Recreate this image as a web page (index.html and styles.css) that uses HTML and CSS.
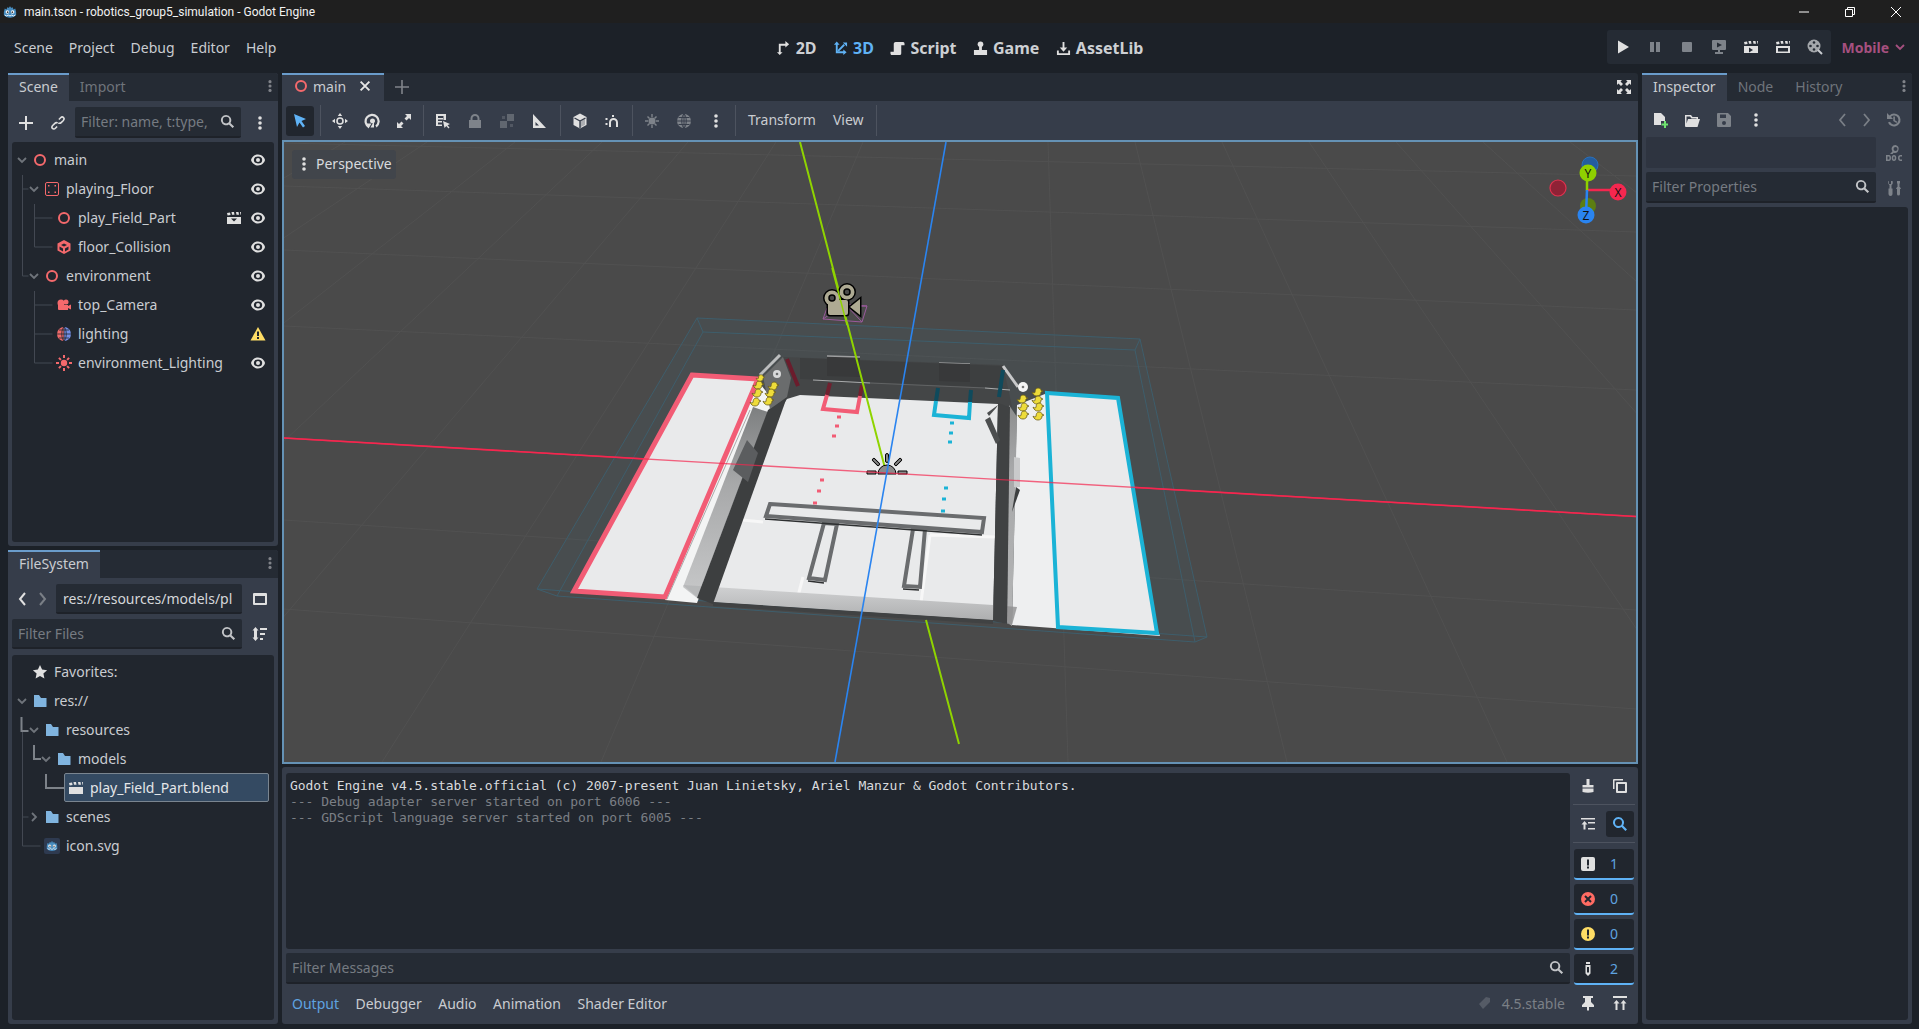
FILE: index.html
```html
<!DOCTYPE html>
<html lang="en">
<head>
  <meta charset="UTF-8" />
  <title>main.tscn - robotics_group5_simulation - Godot Engine</title>
  <link rel="stylesheet" href="styles.css">
</head>
<body>

  <!-- shared icons -->
  <svg class="defs">
    <symbol id="i-eye" viewBox="0 0 16 16"><path fill-rule="evenodd" d="M8 2.500C4.200 2.500 1.500 5.500 1 8c.5 2.500 3.200 5.500 7 5.500s6.500-3 7-5.500c-.5-2.500-3.200-5.500-7-5.500zm0 2a4.200 3.500 0 1 1 0 7 4.200 3.500 0 0 1 0-7z"/><circle cx="8" cy="8" r="2"/></symbol>
    <symbol id="i-dots" viewBox="0 0 16 16"><circle cx="8" cy="3" r="1.800"/><circle cx="8" cy="8" r="1.800"/><circle cx="8" cy="13" r="1.800"/></symbol>
    <symbol id="i-search" viewBox="0 0 16 16"><path d="M6.500 1a5.500 5.500 0 1 0 3 10.100l3.900 3.900 1.600-1.600-3.900-3.900A5.500 5.500 0 0 0 6.500 1zm0 2a3.500 3.500 0 1 1 0 7 3.500 3.500 0 0 1 0-7z"/></symbol>
    <symbol id="i-node" viewBox="0 0 16 16"><circle cx="8" cy="8" r="5" fill="none" stroke="currentColor" stroke-width="2"/></symbol>
    <symbol id="i-arrow" viewBox="0 0 12 12"><path d="M2 4l4 4 4-4" fill="none" stroke="currentColor" stroke-width="1.800"/></symbol>
    <symbol id="i-folder" viewBox="0 0 16 16"><path d="M2 2h5l2 3h5.500v8.500a.5.5 0 0 1-.5.500H2.500a.5.5 0 0 1-.5-.5z"/></symbol>
    <symbol id="i-clapper" viewBox="0 0 16 16"><path d="M1 7h14v7H1zM1 3l3-.6.6 2.600-3 .5zM5.500 2h2.500l.5 2.800H6zM10 2h2.500l.5 2.800h-2.500zM14 2h1v2.800h-.5z"/></symbol>
    <symbol id="i-godot" viewBox="0 0 16 16"><path d="M1 8L2 4l2 1 1-2.500 2 1V2h2v1.500l2-1L12 5l2-1 1 4v3.500c-2 2-4 3-7 3s-5-1-7-3z" fill="#478cbf"/><circle cx="5" cy="8" r="2" fill="#fff"/><circle cx="11" cy="8" r="2" fill="#fff"/><circle cx="5.300" cy="8.200" r="1" fill="#414042"/><circle cx="10.700" cy="8.200" r="1" fill="#414042"/><path d="M2 11.500l2 1 2-1 2 1 2-1 2 1 2-1" fill="none" stroke="#fff"/></symbol>
    <symbol id="i-duck" viewBox="0 0 12 10"><path d="M1 5c1 1 2 1 3 .5C4 3 5 1 7 1s3 1 3 2.500L12 4l-2 1c0 3-2 4-4 4S2 8 1 5z" fill="#eedc3a" stroke="#6b5d18" stroke-width=".8"/></symbol>
    <symbol id="i-ray" viewBox="0 0 10 4"><rect x=".5" y=".5" width="9" height="3" rx="1.500" fill="#8a8a8a" stroke="#000"/></symbol>
  </svg>

  <div class="titlebar">
    <svg class="title-logo"><use href="#i-godot"/></svg>
    <span class="title-text">main.tscn - robotics_group5_simulation - Godot Engine</span>
    <div class="win-btns">
      <svg class="win-btn" viewBox="0 0 12 12"><path d="M1 6h10" stroke="#fff"/></svg>
      <svg class="win-btn" viewBox="0 0 12 12"><path d="M1.500 3.500h7v7h-7zM3.500 3.500v-2h7v7h-2" fill="none" stroke="#fff"/></svg>
      <svg class="win-btn" viewBox="0 0 12 12"><path d="M1 1l10 10M11 1L1 11" stroke="#fff"/></svg>
    </div>
  </div>

  <div class="menubar">
    <nav class="menus">
      <span>Scene</span><span>Project</span><span>Debug</span><span>Editor</span><span>Help</span>
    </nav>
    <div class="modes">
      <span class="mode"><svg class="ico" viewBox="0 0 16 16"><path d="M4 15l-3-3h2V3h7V0l4 3.500L10 7V5H5v7h2z"/></svg>2D</span>
      <span class="mode mode-on"><svg class="ico" viewBox="0 0 16 16"><path d="M1 4l3-3.500L7 4H5v7h6V9l3.500 3-3.500 3v-2H3V4z"/><path d="M5.500 10.500L12 4" stroke="currentColor" stroke-width="2"/><path d="M10.500 1.500H15V6z"/></svg>3D</span>
      <span class="mode"><svg class="ico" viewBox="0 0 16 16"><path d="M6 1h8c1 0 1.500 1 1.500 2v1.500H12V13c0 1.500-1 2-2 2H2c-1 0-1.500-1-1.500-2v-1.500H4V3c0-1 1-2 2-2z"/></svg>Script</span>
      <span class="mode"><svg class="ico" viewBox="0 0 16 16"><circle cx="8" cy="3.500" r="3"/><path d="M6.500 6h3v3.500H15V15H1V9.500h5.500z"/></svg>Game</span>
      <span class="mode"><svg class="ico" viewBox="0 0 16 16"><path d="M7 1h2v6h3l-4 4.500L4 7h3zM1 10h2v3h10v-3h2v5H1z"/></svg>AssetLib</span>
    </div>
    <div class="run-area">
      <div class="run-bar">
        <svg class="ico" viewBox="0 0 16 16"><path d="M3 1.500l11 6.500-11 6.500z"/></svg>
        <svg class="ico dim" viewBox="0 0 16 16"><path d="M3 3h4v10H3zM9 3h4v10H9z"/></svg>
        <svg class="ico dim" viewBox="0 0 16 16"><rect x="3" y="3" width="10" height="10" rx="1"/></svg>
        <svg class="ico dim" viewBox="0 0 16 16"><path d="M2 1h12a1 1 0 0 1 1 1v8a1 1 0 0 1-1 1H9v2h3v2H4v-2h3v-2H2a1 1 0 0 1-1-1V2a1 1 0 0 1 1-1z"/><path d="M6 3.500l5 2.500-5 2.500z" fill="#252b34"/></svg>
        <svg class="ico" viewBox="0 0 16 16"><use href="#i-clapper"/><path d="M6 8.500l4 2.500-4 2.500z" fill="#252b34"/></svg>
        <svg class="ico" viewBox="0 0 16 16"><use href="#i-clapper"/><rect x="3" y="9" width="10" height="3.500" fill="#252b34"/></svg>
        <svg class="ico dim2" viewBox="0 0 16 16"><circle cx="7" cy="7" r="6.500"/><circle cx="7" cy="3.500" r="1.300" fill="#252b34"/><circle cx="3.500" cy="7" r="1.300" fill="#252b34"/><circle cx="10.500" cy="7" r="1.300" fill="#252b34"/><circle cx="7" cy="10.500" r="1.300" fill="#252b34"/><path d="M11 11l4 4" stroke="#c9ccd0" stroke-width="2"/></svg>
      </div>
      <span class="render-mode">Mobile <svg class="chev"><use href="#i-arrow"/></svg></span>
    </div>
  </div>

  <div class="main">

    <div class="col-side">
      <section class="dock dock-scene">
        <div class="tabs">
          <span class="tab on">Scene</span><span class="tab">Import</span>
          <svg class="ico tab-menu"><use href="#i-dots"/></svg>
        </div>
        <div class="tool-row">
          <svg class="ico tool-add" viewBox="0 0 16 16"><path d="M7 1h2v6h6v2H9v6H7V9H1V7h6z"/></svg>
          <svg class="ico tool-link" viewBox="0 0 16 16"><path d="M9 4l2-2c1-1 2.500-1 3.300-.2s.8 2.200-.2 3.300l-2.500 2.500c-1 1-2.300 1-3.100.2M7 12l-2 2c-1 1-2.500 1-3.300.2s-.8-2.200.2-3.300l2.500-2.500c1-1 2.300-1 3.100-.2" fill="none" stroke="currentColor" stroke-width="1.800"/></svg>
          <div class="field field-scene"><span class="ph">Filter: name, t:type,</span><svg class="ico"><use href="#i-search"/></svg></div>
          <svg class="ico tool-more"><use href="#i-dots"/></svg>
        </div>
        <div class="tree">
          <svg class="guides">
            <path d="M10.500 33v101M10.500 47h6M10.500 134h6M22.500 62v43M22.500 76h18M22.500 105h18M22.500 149v72M22.500 163h18M22.500 192h18M22.500 221h18" />
          </svg>
          <div class="row lv0"><svg class="arrow"><use href="#i-arrow"/></svg><svg class="ico red"><use href="#i-node"/></svg><span>main</span><svg class="ico eye"><use href="#i-eye"/></svg></div>
          <div class="row lv1"><svg class="arrow"><use href="#i-arrow"/></svg><svg class="ico red" viewBox="0 0 16 16"><rect x="1.500" y="1.500" width="13" height="13" rx="1.500" fill="none" stroke="currentColor"/><path d="M4 4h1.500v1.500H4zM10.500 4H12v1.500h-1.500zM4 10.500h1.500V12H4zM10.500 10.500H12V12h-1.500z"/></svg><span>playing_Floor</span><svg class="ico eye"><use href="#i-eye"/></svg></div>
          <div class="row lv2"><span class="arrow"></span><svg class="ico red"><use href="#i-node"/></svg><span>play_Field_Part</span><svg class="ico badge" viewBox="0 0 16 16"><use href="#i-clapper"/><path d="M5 8.500h6l-3 3z" fill="#21262e"/></svg><svg class="ico eye"><use href="#i-eye"/></svg></div>
          <div class="row lv2"><span class="arrow"></span><svg class="ico red" viewBox="0 0 16 16"><path d="M8 1l6.500 3.500v7L8 15l-6.500-3.500v-7z"/><path d="M8 4.500L11 6 8 7.500 5 6zM3.500 7.500l3.500 2v3l-3.500-2zM12.500 7.500v3l-3.500 2v-3z" fill="#21262e"/></svg><span>floor_Collision</span><svg class="ico eye"><use href="#i-eye"/></svg></div>
          <div class="row lv1"><svg class="arrow"><use href="#i-arrow"/></svg><svg class="ico red"><use href="#i-node"/></svg><span>environment</span><svg class="ico eye"><use href="#i-eye"/></svg></div>
          <div class="row lv2"><span class="arrow"></span><svg class="ico red" viewBox="0 0 16 16"><circle cx="5" cy="6" r="3.500"/><circle cx="10" cy="5" r="2.500"/><path d="M2 8h10v5H3a1 1 0 0 1-1-1zM12 9l3-1.500v5L12 11z"/></svg><span>top_Camera</span><svg class="ico eye"><use href="#i-eye"/></svg></div>
          <div class="row lv2"><span class="arrow"></span><svg class="ico" viewBox="0 0 16 16"><path d="M8 1a7 7 0 0 0 0 14z" fill="#f06a6a"/><path d="M8 1a7 7 0 0 1 0 14z" fill="#7590e8"/><path d="M1 8h14M8 1v14M3 4h10M3 12h10M8 1C5 3 5 13 8 15M8 1c3 2 3 12 0 14" fill="none" stroke="#21262e" stroke-width=".8"/></svg><span>lighting</span><svg class="ico warn" viewBox="0 0 16 16"><path d="M8 1l7.500 13.500H.5z" fill="#ffdd65"/><path d="M7 5.500h2V10H7zM7 11h2v2H7z" fill="#21262e"/></svg></div>
          <div class="row lv2"><span class="arrow"></span><svg class="ico red" viewBox="0 0 16 16"><circle cx="8" cy="8" r="3.200"/><path d="M7 0h2v3H7zM7 13h2v3H7zM0 7h3v2H0zM13 7h3v2h-3zM2.200 3.600l1.400-1.400 2 2-1.400 1.400zM10.400 11.800l1.400-1.400 2 2-1.400 1.400zM2.200 12.400l2-2 1.400 1.400-2 2zM10.400 4.200l2-2 1.400 1.400-2 2z"/></svg><span>environment_Lighting</span><svg class="ico eye"><use href="#i-eye"/></svg></div>
        </div>
      </section>

      <section class="dock dock-files">
        <div class="tabs">
          <span class="tab on">FileSystem</span>
          <svg class="ico tab-menu"><use href="#i-dots"/></svg>
        </div>
        <div class="nav-row">
          <svg class="arr-btn" viewBox="0 0 12 16"><path d="M8 2L3 8l5 6" fill="none" stroke="#e0e0e0" stroke-width="2"/></svg>
          <svg class="arr-btn" viewBox="0 0 12 16"><path d="M4 2l5 6-5 6" fill="none" stroke="#7a7f86" stroke-width="2"/></svg>
          <div class="field field-path"><span class="path-text">res://resources/models/pl</span></div>
          <svg class="ico split-btn" viewBox="0 0 16 16"><path fill-rule="evenodd" d="M1 3a1 1 0 0 1 1-1h12a1 1 0 0 1 1 1v10a1 1 0 0 1-1 1H2a1 1 0 0 1-1-1zm2 2v7h10V5z"/></svg>
        </div>
        <div class="nav-row">
          <div class="field field-files"><span class="ph">Filter Files</span><svg class="ico"><use href="#i-search"/></svg></div>
          <svg class="ico split-btn" viewBox="0 0 16 16"><path d="M3.500 1l3 3.500H5v7h1.500l-3 3.500-3-3.500H2v-7H.5zM8 2h7v2H8zM8 7h5v2H8zM8 12h3v2H8z"/></svg>
        </div>
        <div class="tree tree-files">
          <svg class="guides">
            <path d="M10.500 75v116M10.500 162h6M10.500 191h18" />
            <path class="strong" d="M9.500 62v14h7M22 90v14h7M34 119v14h18" />
          </svg>
          <div class="row lv0"><span class="arrow"></span><svg class="ico star" viewBox="0 0 16 16"><path d="M8 1l2.100 4.600 5 .6-3.700 3.400 1 4.900L8 12.100l-4.400 2.400 1-4.900L.9 6.200l5-.6z"/></svg><span>Favorites:</span></div>
          <div class="row lv0"><svg class="arrow"><use href="#i-arrow"/></svg><svg class="ico folder"><use href="#i-folder"/></svg><span>res://</span></div>
          <div class="row lv1"><svg class="arrow"><use href="#i-arrow"/></svg><svg class="ico folder"><use href="#i-folder"/></svg><span>resources</span></div>
          <div class="row lv2"><svg class="arrow"><use href="#i-arrow"/></svg><svg class="ico folder"><use href="#i-folder"/></svg><span>models</span></div>
          <div class="row lv3 selected"><svg class="ico clap"><use href="#i-clapper"/></svg><span>play_Field_Part.blend</span></div>
          <div class="row lv1"><svg class="arrow arrow-closed"><use href="#i-arrow"/></svg><svg class="ico folder"><use href="#i-folder"/></svg><span>scenes</span></div>
          <div class="row lv1"><span class="arrow"></span><span class="svg-chip"><svg class="ico chip-ico"><use href="#i-godot"/></svg></span><span>icon.svg</span></div>
        </div>
      </section>
    </div>

    <div class="col-center">
      <section class="editor">
        <div class="tabs tabs-scene">
          <span class="tab on tab-main"><svg class="ico red"><use href="#i-node"/></svg>main<svg class="ico tab-close" viewBox="0 0 16 16"><path d="M3 3l10 10M13 3L3 13" stroke="currentColor" stroke-width="2.200"/></svg></span>
          <svg class="ico tab-plus" viewBox="0 0 16 16"><path d="M7.200 1h1.600v6.200H15v1.600H8.800V15H7.200V8.800H1V7.200h6.200z"/></svg>
          <svg class="ico tab-full" viewBox="0 0 16 16"><path d="M1 1h5L4.500 2.500 7 5 5 7 2.500 4.500 1 6zM15 1v5l-1.500-1.500L11 7 9 5l2.500-2.500L10 1zM1 15v-5l1.500 1.500L5 9l2 2-2.500 2.500L6 15zM15 15h-5l1.500-1.500L9 11l2-2 2.500 2.500L15 10z"/></svg>
        </div>
        <div class="toolbar">
          <span class="tb tb-on"><svg class="ico" viewBox="0 0 16 16"><path d="M2 1l12 5-4.500 2 3.500 5-2 1.500L7.500 9.500 5 14z"/></svg></span>
          <i class="sep"></i>
          <span class="tb"><svg class="ico" viewBox="0 0 16 16"><circle cx="8" cy="8" r="3" fill="none" stroke="currentColor" stroke-width="1.600"/><path d="M8 0l2.200 3H5.800zM8 16l-2.200-3h4.400zM0 8l3-2.200v4.400zM16 8l-3 2.200V5.800z"/></svg></span>
          <span class="tb"><svg class="ico" viewBox="0 0 16 16"><path d="M5 14A6.500 6.500 0 1 1 12 13.500" fill="none" stroke="currentColor" stroke-width="2.200"/><path d="M6 8a2.500 2.500 0 0 1 5 0c0 1-.5 1.500-1 2v4.500H6.500L9 10c-1 .5-3 0-3-2zM1.500 10.500h6l-3 5z"/></svg></span>
          <span class="tb"><svg class="ico" viewBox="0 0 16 16"><path d="M9 1h6v6l-2-2-2.500 2.500L8.500 5.500 11 3zM7 15H1V9l2 2 2.500-2.500 2 2L5 13z"/></svg></span>
          <i class="sep"></i>
          <span class="tb"><svg class="ico" viewBox="0 0 16 16"><path fill-rule="evenodd" d="M1 1h10v6H8.500V3H3v2h5v1.500H3V8h4v1.500H3v2h4V13H1z"/><path d="M8 8l7 3-2.500 1.200 2 2.300-1 1-2.200-2.500L9.500 15z"/></svg></span>
          <span class="tb dim"><svg class="ico" viewBox="0 0 16 16"><path fill-rule="evenodd" d="M8 1a4.500 4.500 0 0 0-4.500 4.500V7H2v8h12V7h-1.500V5.500A4.500 4.500 0 0 0 8 1zm0 2a2.500 2.500 0 0 1 2.500 2.500V7h-5V5.500A2.500 2.500 0 0 1 8 3z"/></svg></span>
          <span class="tb dim"><svg class="ico" viewBox="0 0 16 16"><path d="M8 1h7v7H8zM1 8h7v7H1z" opacity=".6"/><path d="M3 3h3v3H3zM11 11h3v3h-3z" opacity=".4"/></svg></span>
          <span class="tb"><svg class="ico" viewBox="0 0 16 16"><path fill-rule="evenodd" d="M2 1l13 14H2zm2.500 8v3.500H8z"/></svg></span>
          <i class="sep sep-a"></i>
          <span class="tb"><svg class="ico" viewBox="0 0 16 16"><path d="M8 .5l6.500 3.500v8L8 15.500 1.500 12V4z"/><path d="M8 8L2.500 5M8 8l5.500-3M8 8v7" stroke="#363d4a" stroke-width="1.400"/><path d="M8 8l5-2.800v6.600L8 14.500z" fill="#363d4a" opacity=".3"/></svg></span>
          <span class="tb"><svg class="ico" viewBox="0 0 16 16"><path d="M6 14V9.500a3.500 3.500 0 0 1 7 0V14" fill="none" stroke="currentColor" stroke-width="2"/><path d="M1.500 5h2v2h-2zM1.500 10h2v2h-2zM8 2h2v2H8z"/></svg></span>
          <i class="sep sep-b"></i>
          <span class="tb dim"><svg class="ico" viewBox="0 0 16 16"><circle cx="8" cy="8" r="3.500"/><path d="M7.300 1h1.400v3H7.300zM7.300 12h1.400v3H7.300zM1 7.300h3v1.400H1zM12 7.300h3v1.400h-3zM3 4l1-1 2 2-1 1zM10 11l1-1 2 2-1 1zM3 12l2-2 1 1-2 2zM10 5l2-2 1 1-2 2z"/></svg></span>
          <span class="tb dim"><svg class="ico" viewBox="0 0 16 16"><circle cx="8" cy="8" r="7"/><path d="M1 8h14M8 1v14M2.500 4.500h11M2.500 11.500h11M8 1C5 3 5 13 8 15M8 1c3 2 3 12 0 14" fill="none" stroke="#363d4a"/></svg></span>
          <span class="tb"><svg class="ico"><use href="#i-dots"/></svg></span>
          <i class="sep"></i>
          <span class="tb-text tb-transform">Transform</span>
          <span class="tb-text">View</span>
          <i class="sep sep-end"></i>
        </div>

        <div class="viewport">
          <svg class="scene" viewBox="284 142 1352 620">
            <defs>
              <linearGradient id="wall-l" x1="0" y1="0" x2="0" y2="1"><stop offset="0" stop-color="#7d7f80"/><stop offset=".4" stop-color="#a7a8a9"/><stop offset="1" stop-color="#c7c8c9"/></linearGradient>
              <linearGradient id="wall-b" x1="0" y1="0" x2="0" y2="1"><stop offset="0" stop-color="#cfd0d1"/><stop offset="1" stop-color="#aeafb0"/></linearGradient>
              <linearGradient id="wall-r" x1="0" y1="0" x2="0" y2="1"><stop offset="0" stop-color="#8c8d8e"/><stop offset=".3" stop-color="#a8a9aa"/><stop offset="1" stop-color="#b4b5b6"/></linearGradient>
            </defs>

            <!-- ground grid -->
            <g class="grid">
              <path d="M345 142L-706 762M427 142L-499 762M515 142L-277 762M602 142L-57 762M688 142L160 762M776 142L382 762M863 142L601 762M1048 142L1068 762M1135 142L1287 762M1222 142L1507 762M1309 142L1726 762M1396 142L1946 762M1483 142L2165 762M1570 142L2385 762"/>
              <path d="M284 143L1636 176M284 186L1636 232M284 326L1636 390M284 609L1636 709M284 250L1636 310M284 520L1636 610"/>
            </g>

            <!-- bounding boxes round the field -->
            <path d="M697 318L1140 339 1207 637 537 589z" fill="#40606c" opacity=".18"/>
            <path class="wire" d="M697 318L1140 339 1207 637 537 589zM703 332L1135 350 1195 642 557 596zM697 318l6 14M1140 339l-5 11M537 589l20 7M1207 637l-12 5"/>

            <!-- red axis, under the floor pieces where it turns faint -->
            <path d="M284 438L1636 516.500" stroke="#f5274f" stroke-width="1.600"/>

            <!-- side strips and fields -->
            <path d="M757 380L773 400 697 603 665 600z" fill="#f3f4f4"/>
            <path d="M1017 405L1050 392 1160 636 1012 625z" fill="#eeeff0"/>
            <path class="field-red" d="M692 375L758 379 665 597 574 591z"/>
            <path class="field-blue" d="M1047 393L1118 398 1157 633 1058 627z"/>
            <path d="M750 410L667 599" stroke="#a9aaab" stroke-width="1"/>

            <!-- back wall -->
            <path d="M783 357L1003 365 1012 407 998 404 800 395 783 400z" fill="#444647"/>
            <path d="M800 358L1003 366 1003 388 800 379z" fill="#3d3f40"/>
            <path d="M827 356L860 357 860 377 827 376z" fill="#38393a"/>
            <path d="M827 356L860 357M939 363L970 364" stroke="#9d9e9f" stroke-width="1.500"/>
            <path d="M939 363L970 364 970 382 939 381z" fill="#38393a"/>
            <path d="M870 383L985 388" stroke="#616364" stroke-width="1"/>
            <path d="M813 380L870 383M985 388L1010 390" stroke="#a9abac" stroke-width="1"/>

            <!-- walls lit side -->
            <path d="M753 407L768 412 697 598 683 587z" fill="url(#wall-l)"/>
            <path d="M1009 405L1017 417 1012 626 1007 622z" fill="url(#wall-r)"/>

            <!-- floor -->
            <path d="M787 399L800 395 998 404 993 620 713 602 783 405z" fill="#e9eaeb"/>
            <path d="M742 520L763 522M930 535L995 537M930 535L920 610M803 577L797 600" stroke="#f7f7f7" stroke-width="3" fill="none"/>
            <path d="M713 587L993 605 993 620 713 602z" fill="url(#wall-b)"/>
            <path d="M683 585L713 587 713 602 697 597z" fill="#b3b4b5" opacity=".8"/>
            <path d="M993 605L1017 607 1012 625 993 620z" fill="#8e8f90" opacity=".8"/>
            <path d="M713 602L993 620 993 624 713 606z" fill="#404243"/>

            <!-- walls dark side, over the band at the front -->
            <path d="M768 410L787 397 713 604 697 598z" fill="#3d3f40"/>
            <path d="M998 403L1010 407 1007 624 993 621z" fill="#404243"/>

            <path d="M985 420L990 417 1000 440 996 444zM987 413L998 405 996 408 989 416z" fill="#4c4e4f"/>
            <path d="M747 440L758 453 748 482 733 470z" fill="#5b5d5f"/>
            <path d="M1014 457L1020 458 1020 487 1014 487z" fill="#c9cacb"/>
            <path d="M1016 487L1020 490 1012 512z" fill="#3d3f40"/>

            <!-- corner posts -->
            <path d="M763 377L783 357 791 378 787 397 770 409z" fill="#6a6c6d"/>
            <path d="M760 375L780 355" stroke="#bcbebf" stroke-width="3"/>
            <circle cx="777" cy="374" r="4" fill="#d8d9da"/>
            <circle cx="777" cy="374" r="1.300" fill="#6a6c6d"/>
            <path d="M787 359L798 386" stroke="#6b1c2c" stroke-width="4"/>
            <path d="M1003 366L1018 387" stroke="#c8c9ca" stroke-width="3"/>
            <circle cx="1023" cy="387" r="5" fill="#f4f4f4"/>
            <circle cx="1023" cy="387" r="1.300" fill="#777"/>
            <path d="M1003 370L999 397" stroke="#0f4a5c" stroke-width="4"/>

            <!-- goals and dots -->
            <path d="M830 383L827 395M862 385L860 396" stroke="#70202f" stroke-width="4"/>
            <path class="goal-red" d="M827 395L823 409 857 412 860 396"/>
            <path d="M938 388L936 401M971 390L970 402" stroke="#0f4a5c" stroke-width="4"/>
            <path class="goal-blue" d="M936 401L934 415 969 418 970 402"/>
            <path class="dots-red" d="M837 417h4M835 426h4M832 436h4M820 480h4M817 491h4M813 503h4"/>
            <path class="dots-blue" d="M950 423h4M949 433h4M948 442h4M944 488h4M942 499h4M941 511h4"/>

            <!-- T shaped line -->
            <path class="t-bar" d="M770 504L984 518 982 532 766 516z"/>
            <path class="t-bar" d="M824 523L809 578 825 580 837 524z"/>
            <path class="t-bar" d="M913 529L904 586 920 587 925 529z"/>
            <path d="M765 519L982 535M808 581L824 583M903 589L919 590" stroke="#2e3031" stroke-width="1.500"/>

            <!-- ducks -->
            <use href="#i-duck" x="752" y="380" width="12" height="10"/><use href="#i-duck" x="751" y="388" width="12" height="10"/><use href="#i-duck" x="749" y="397" width="12" height="10"/><use href="#i-duck" x="755" y="374" width="10" height="8"/>
            <use href="#i-duck" x="767" y="381" width="12" height="10"/><use href="#i-duck" x="764" y="388" width="12" height="10"/><use href="#i-duck" x="762" y="396" width="12" height="10"/>
            <use href="#i-duck" x="1016" y="394" width="12" height="10"/><use href="#i-duck" x="1017" y="402" width="12" height="10"/><use href="#i-duck" x="1017" y="410" width="12" height="10"/>
            <use href="#i-duck" x="1031" y="387" width="12" height="10"/><use href="#i-duck" x="1031" y="395" width="12" height="10"/><use href="#i-duck" x="1032" y="402" width="12" height="10"/><use href="#i-duck" x="1032" y="411" width="12" height="10"/>

            <!-- axes above the floor -->
            <path d="M800 142L886 472M926 620L959 744" stroke="#8fd400" stroke-width="2"/>

            <!-- camera gizmo -->
            <path class="frustum" d="M827 308L867 306 862 322 823 319zM827 308L845 304M867 306L845 304M862 322L845 304M823 319L845 304"/>
            <g class="cam-outline">
              <circle cx="832" cy="298" r="7.500"/><circle cx="847" cy="292" r="7.500"/><rect x="828" y="300" width="20" height="15" rx="2"/><path d="M850 307l10-8v16z"/>
            </g>
            <g class="cam-icon">
              <circle cx="832" cy="298" r="7.500"/><circle cx="847" cy="292" r="7.500"/><rect x="828" y="300" width="20" height="15" rx="2"/><path d="M850 307l10-8v16z"/>
            </g>
            <g class="cam-hole"><circle cx="832" cy="298" r="3"/><circle cx="847" cy="292" r="3"/></g>
            <path d="M832 268L847 325" stroke="#8fd400" stroke-width="1.500"/>

            <!-- light gizmo -->
            <path d="M878 474a9 9 0 0 1 18 0z" fill="#8a8a8a" stroke="#000"/>
            <use href="#i-ray" x="882" y="456" width="10" height="4" transform="rotate(90 887 458)"/>
            <use href="#i-ray" x="871" y="460" width="10" height="4" transform="rotate(45 876 462)"/>
            <use href="#i-ray" x="893" y="460" width="10" height="4" transform="rotate(-45 898 462)"/>
            <path d="M867 474v-3h9v3zM898 474v-3h9v3z" fill="#8a8a8a" stroke="#000"/>

            <path d="M284 438L1636 516.500" stroke="#f5274f" stroke-width="1.400" opacity=".7"/>
            <path d="M946 142L835 762" stroke="#2a84f0" stroke-width="1.600"/>

            <!-- orientation gizmo -->
            <circle cx="1590" cy="165" r="8" fill="#235d9f" stroke="#2a6fb8"/>
            <circle cx="1558" cy="188" r="8" fill="#8f2236" stroke="#e0324f" stroke-width="1.200"/>
            <circle cx="1588" cy="206" r="8" fill="#5c7e12"/>
            <path d="M1587 190H1618" stroke="#f5274f" stroke-width="2.500"/>
            <path d="M1587 191V173" stroke="#8fd000" stroke-width="2.500"/>
            <path d="M1587 190L1586 215" stroke="#2a84f0" stroke-width="2.500"/>
            <circle cx="1618" cy="192" r="8.500" fill="#f5274f"/>
            <circle cx="1588" cy="173" r="8.500" fill="#8fd000"/>
            <circle cx="1586" cy="215" r="8.500" fill="#2a84f0"/>
            <text class="giz-text" x="1618" y="196.500">X</text>
            <text class="giz-text" x="1588" y="177.500">Y</text>
            <text class="giz-text" x="1586" y="219.500">Z</text>
          </svg>
          <div class="persp"><svg class="ico"><use href="#i-dots"/></svg>Perspective</div>
        </div>
      </section>

      <section class="bottom">
        <div class="bottom-body">
          <div class="log-col">
            <pre class="log"><span class="log-head">Godot Engine v4.5.stable.official (c) 2007-present Juan Linietsky, Ariel Manzur &amp; Godot Contributors.</span>
--- Debug adapter server started on port 6006 ---
--- GDScript language server started on port 6005 ---</pre>
            <div class="field field-log"><span class="ph">Filter Messages</span><svg class="ico"><use href="#i-search"/></svg></div>
          </div>
          <div class="log-side">
            <div class="side-row">
              <svg class="ico" viewBox="0 0 16 16"><path d="M6.500 1h3v6h4v2.500h-11V7h4zM2.500 10.500h11V14c-3.500 1-7.500 1-11 0z"/></svg>
              <svg class="ico" viewBox="0 0 16 16"><path d="M2 1h9v1.500H2.500V11H1V2a1 1 0 0 1 1-1z"/><path fill-rule="evenodd" d="M5 4h9a1 1 0 0 1 1 1v9a1 1 0 0 1-1 1H5a1 1 0 0 1-1-1V5a1 1 0 0 1 1-1zm1 2v7h7V6z"/></svg>
            </div>
            <i class="side-sep"></i>
            <div class="side-row">
              <svg class="ico" viewBox="0 0 16 16"><path d="M1 2h14v1.500H1zM8 6h7v1.500H8zM8 12h7v1.500H8zM4.500 5l3 3.500H5.500V13.500h-2V8.500h-2z"/></svg>
              <span class="side-on"><svg class="ico"><use href="#i-search"/></svg></span>
            </div>
            <i class="side-sep"></i>
            <div class="count"><svg class="ico" viewBox="0 0 16 16"><path fill-rule="evenodd" d="M3 1h10a2 2 0 0 1 2 2v10a2 2 0 0 1-2 2H3a2 2 0 0 1-2-2V3a2 2 0 0 1 2-2zm4 2.500v6h2v-6zm0 7V12.500h2v-2z"/></svg><span>1</span></div>
            <div class="count"><svg class="ico" viewBox="0 0 16 16"><circle cx="8" cy="8" r="7" fill="#ff6b63"/><path d="M5 5l6 6M11 5l-6 6" stroke="#21262e" stroke-width="2"/></svg><span>0</span></div>
            <div class="count"><svg class="ico" viewBox="0 0 16 16"><circle cx="8" cy="8" r="7" fill="#ffdd65"/><path d="M7 3.500h2v6H7zM7 10.500h2v2H7z" fill="#21262e"/></svg><span>0</span></div>
            <div class="count"><svg class="ico" viewBox="0 0 16 16"><path fill-rule="evenodd" d="M6 1h4v2H6zM5.500 4h5v8.500L8 15l-2.500-2.500zM7 6v5.500h2V6z"/></svg><span>2</span></div>
          </div>
        </div>
        <div class="bottom-tabs">
          <span class="btab btab-on">Output</span><span class="btab">Debugger</span><span class="btab">Audio</span><span class="btab">Animation</span><span class="btab">Shader Editor</span>
          <div class="bottom-right">
            <svg class="ico ver-ico" viewBox="0 0 16 16"><path d="M3 9l7-7 4 1 0 4-7 7z"/></svg>
            <span class="version">4.5.stable</span>
            <svg class="ico pin" viewBox="0 0 16 16"><path d="M3 1h10v2h-2v4l3 3v2H9v3.500H7V12H2v-2l3-3V3H3z"/></svg>
            <svg class="ico pin2" viewBox="0 0 16 16"><path d="M1 1h14v2H1zM4.500 5l3 3.500H5.500V15h-2V8.500h-2zM11.500 5l3 3.500h-2V15h-2V8.500h-2z"/></svg>
          </div>
        </div>
      </section>
    </div>

    <div class="col-side col-right">
      <section class="dock dock-inspector">
        <div class="tabs">
          <span class="tab on">Inspector</span><span class="tab">Node</span><span class="tab">History</span>
          <svg class="ico tab-menu"><use href="#i-dots"/></svg>
        </div>
        <div class="insp-tools">
          <svg class="ico" viewBox="0 0 16 16"><path d="M2 1h7l4 4v4H9v4H2z"/><path d="M12 9h2v2.500h2v2h-2V16h-2v-2.500H9.500v-2H12z" fill="#6fe36f"/></svg>
          <svg class="ico" viewBox="0 0 16 16"><path fill-rule="evenodd" d="M1 3h6l1.500 2H14v2h2l-2.500 8H2a1 1 0 0 1-1-1zm1.500 1.500v7L4 7h8.500V6.500H7.500L6 4.500z"/></svg>
          <svg class="ico dim" viewBox="0 0 16 16"><path fill-rule="evenodd" d="M2 1h10l3 3v10a1 1 0 0 1-1 1H2a1 1 0 0 1-1-1V2a1 1 0 0 1 1-1zm2 1.500V6h6V2.500zM8 9a2 2 0 1 0 0 4 2 2 0 0 0 0-4z"/></svg>
          <svg class="ico"><use href="#i-dots"/></svg>
          <span class="insp-spacer"></span>
          <svg class="arr-btn" viewBox="0 0 12 16"><path d="M8 2L3 8l5 6" fill="none" stroke="#7a7f86" stroke-width="1.800"/></svg>
          <svg class="arr-btn" viewBox="0 0 12 16"><path d="M4 2l5 6-5 6" fill="none" stroke="#7a7f86" stroke-width="1.800"/></svg>
          <svg class="ico dim hist" viewBox="0 0 16 16"><path d="M8 1.500a6.500 6.500 0 1 1-6 9l2-.8A4.400 4.400 0 1 0 5 4.800L7 7H1V1l2.500 2.500A6.500 6.500 0 0 1 8 1.500zM7.300 4.500h1.600v3.700l2.400 1.500-.8 1.300-3.200-2z"/></svg>
        </div>
        <div class="insp-row">
          <div class="field field-blank"></div>
          <svg class="ico dim side-ico" viewBox="0 0 16 16"><path d="M9.500 0a4 4 0 0 0-3.100 6.500L4 9h2.500l1.200-1.200A4 4 0 1 0 9.500 0zm0 2a2 2 0 1 1 0 4 2 2 0 0 1 0-4z"/><path fill-rule="evenodd" d="M0 10h3c1.300 0 2 1 2 3s-.7 3-2 3H0zm1.500 1.500v3H3c.4 0 .5-.7.5-1.500S3.400 11.500 3 11.500zM8 10c1.500 0 2.300 1.200 2.300 3S9.500 16 8 16s-2.300-1.200-2.300-3 .8-3 2.300-3zm0 1.500c-.5 0-.8.600-.8 1.500s.3 1.500.8 1.500.8-.6.800-1.500-.3-1.500-.8-1.500zM16 10v1.500h-1.500c-.6 0-1 .6-1 1.500s.4 1.500 1 1.500H16V16h-1.500c-1.500 0-2.500-1.200-2.500-3s1-3 2.500-3z"/></svg>
        </div>
        <div class="insp-row">
          <div class="field field-props"><span class="ph">Filter Properties</span><svg class="ico"><use href="#i-search"/></svg></div>
          <svg class="ico dim side-ico" viewBox="0 0 16 16"><path d="M3 1v3h2V1h1.500c.5 1.500.5 3-1 4v3.500h1V14a2 2 0 0 1-2 2 2 2 0 0 1-2-2V8.500h1V5c-1.500-1-1.500-2.500-1-4zM11 1h3v2.500h-.5V7H14l1 2h-1v5a1.500 1.500 0 0 1-3 0V9h-1l1-2h.5V3.500H11z"/></svg>
        </div>
        <div class="tree insp-tree"></div>
      </section>
    </div>

  </div>

</body>
</html>
```

FILE: styles.css
```css
* {
  box-sizing: border-box;
}

html, body {
  margin: 0;
  width: 1919px;
  height: 1029px;
  overflow: hidden;
}

body {
  display: flex;
  flex-direction: column;
  background-color: #1c2128;
  color: #c9ccd1;
  font-family: "Noto Sans", sans-serif;
  font-size: 14px;
}

.defs {
  display: none;
}

.ico {
  width: 16px;
  height: 16px;
  flex: none;
  fill: currentColor;
  color: #e0e0e0;
}

.dim { color: #7e838a; }
.dim2 { color: #a4a7ab; }
.red { color: #f4696c; }

/* title bar */
.titlebar {
  display: flex;
  align-items: center;
  height: 23px;
  background-color: #1f1f1f;
  color: #f2f2f2;
  font-family: Roboto, sans-serif;
  font-size: 12px;
  padding-left: 3px;
}

.title-logo {
  width: 14px;
  height: 14px;
  margin-right: 7px;
}

.win-btns {
  display: flex;
  margin-left: auto;
  margin-right: 17px;
  gap: 34px;
}

.win-btn {
  width: 12px;
  height: 12px;
}

/* top menu */
.menubar {
  display: grid;
  grid-template-columns: 1fr auto 1fr;
  align-items: center;
  height: 50px;
  padding-bottom: 2px;
}

.menus {
  display: flex;
  gap: 16px;
  padding-left: 14px;
}

.modes {
  display: flex;
  gap: 16.5px;
  padding-top: 2px;
  font-size: 16px;
  font-weight: 700;
}

.mode {
  display: flex;
  align-items: center;
  gap: 5px;
  color: #cdd0d4;
}

.mode .ico {
  width: 15px;
  height: 15px;
}

.mode-on, .mode-on .ico {
  color: #5fb2f5;
}

.run-area {
  display: flex;
  align-items: center;
  justify-content: flex-end;
  padding-right: 13px;
}

.run-bar {
  display: flex;
  align-items: center;
  gap: 16px;
  height: 34px;
  padding: 0 8px;
  background-color: #252b34;
  border-radius: 3px;
}

.run-bar .ico {
  width: 16px;
}

.render-mode {
  display: flex;
  align-items: center;
  gap: 5px;
  margin-left: 10px;
  color: #a5507f;
  font-weight: 700;
}

.chev {
  width: 12px;
  height: 12px;
  color: #a5507f;
}

/* main columns */
.main {
  display: flex;
  gap: 4px;
  height: 951px;
  padding: 0 7px 0 8px;
}

.col-side {
  display: flex;
  flex-direction: column;
  gap: 4px;
  width: 270px;
  flex: none;
}

.col-center {
  display: flex;
  flex-direction: column;
  gap: 3px;
  width: 1356px;
  flex: none;
}

.dock {
  display: flex;
  flex-direction: column;
  background-color: #363d4a;
  border-radius: 3px;
  padding-bottom: 4px;
}

.dock-scene {
  height: 473px;
}

.dock-files {
  flex: 1;
}

.dock-inspector {
  flex: 1;
}

.tabs {
  display: flex;
  align-items: stretch;
  flex: none;
  height: 28px;
  background-color: #252b34;
  border-radius: 3px 3px 0 0;
  color: #6f747b;
}

.tab {
  display: flex;
  align-items: center;
  padding: 0 11px 2px;
}

.tab.on {
  background-color: #363d4a;
  border-top: 2px solid #6a9ccb;
  color: #c9ccd1;
  padding-bottom: 4px;
}

.tab-menu {
  margin: 6px 1px 0 auto;
  color: #808389;
  width: 14px;
  height: 14px;
}

/* input boxes */
.field {
  display: flex;
  align-items: center;
  justify-content: space-between;
  height: 31px;
  padding: 0 6px;
  background-color: #252b34;
  border-bottom: 2px solid #1e2229;
  border-radius: 2px;
}

.ph {
  color: #767b82;
}

.field .ico {
  color: #c2c4c7;
  width: 15px;
  height: 15px;
}

.tool-row {
  display: flex;
  align-items: center;
  height: 41px;
  padding: 4px 0 2px 10px;
}

.tool-link {
  margin-left: 17px;
  width: 14px;
}

.field-scene {
  width: 166px;
  margin-left: 10px;
  white-space: nowrap;
}

.tool-more {
  margin-left: 11px;
}

.nav-row {
  display: flex;
  align-items: center;
  flex: none;
  margin-top: 5px;
  padding-left: 4px;
  height: 30px;
}

.tabs + .nav-row {
  margin-top: 6px;
}

.nav-row .field {
  height: 30px;
}

.arr-btn {
  width: 12px;
  height: 16px;
  flex: none;
}

.nav-row .arr-btn:first-child {
  margin-left: 5px;
}

.nav-row .arr-btn + .arr-btn {
  margin-left: 7px;
}

.field-path {
  width: 186px;
  margin-left: 8px;
  padding-left: 7px;
}

.path-text {
  color: #d5d7da;
  white-space: nowrap;
}

.field-files {
  width: 230px;
}

.split-btn {
  margin-left: 10px;
}

/* trees */
.tree {
  position: relative;
  flex: 1;
  margin: 0 4px;
  padding-top: 3px;
  background-color: #21262e;
  border-radius: 3px;
}

.tree-files {
  margin-top: 6px;
  padding-top: 2px;
}

.guides {
  position: absolute;
  left: 0;
  top: 0;
  width: 100%;
  height: 100%;
  fill: none;
  stroke: #434852;
  stroke-width: 1;
}

.guides .strong {
  stroke: #7d8289;
  stroke-width: 2;
}

.row {
  position: relative;
  display: flex;
  align-items: center;
  height: 29px;
  padding-right: 8px;
  color: #c9ccd1;
}

.lv0 { padding-left: 4px; }
.lv1 { padding-left: 16px; }
.lv2 { padding-left: 28px; }
.lv3 { padding-left: 52px; }

.arrow {
  display: block;
  width: 12px;
  height: 12px;
  margin-right: 4px;
  flex: none;
  color: #6f747b;
}

.arrow-closed {
  transform: rotate(-90deg);
}

.row > .ico:not(.eye):not(.badge):not(.warn) {
  margin-right: 6px;
}

.eye {
  margin-left: auto;
  color: #e0e0e0;
}

.warn {
  margin-left: auto;
}

.badge {
  margin-left: auto;
}

.badge + .eye {
  margin-left: 8px;
}

.folder {
  color: #80b4df;
}

.star {
  color: #e0e0e0;
}

.selected {
  width: 205px;
  margin-left: 52px;
  padding-left: 3px;
  background-color: #344a62;
  border: 1px solid #7a8590;
  border-radius: 2px;
  color: #e4e6e8;
}

.svg-chip {
  display: flex;
  align-items: center;
  justify-content: center;
  width: 16px;
  height: 16px;
  margin-right: 6px;
  background-color: #2e3a50;
  border-radius: 2px;
}

.chip-ico {
  width: 12px;
  height: 12px;
}

/* scene tabs and toolbar */
.editor {
  display: flex;
  flex-direction: column;
  height: 691px;
}

.tabs-scene {
  align-items: center;
}

.tab.tab-main {
  height: 28px;
  width: 102px;
  padding: 0 0 4px 11px;
  color: #c9ccd1;
}

.tab-main .ico.red {
  margin-right: 4px;
}

.tab-close {
  margin-left: 12px;
  width: 14px;
  height: 14px;
  color: #e6e6e6;
}

.tab-plus {
  margin-left: 10px;
  color: #80848a;
}

.tab-full {
  margin-left: auto;
  margin-right: 6px;
}

.toolbar {
  display: flex;
  align-items: center;
  flex: none;
  height: 39px;
  padding-left: 4px;
  background-color: #363d4a;
}

.tb {
  display: flex;
  align-items: center;
  justify-content: center;
  width: 32px;
  height: 30px;
  flex: none;
  color: #e0e0e0;
}

.tb .ico {
  color: inherit;
}

.tb.dim {
  color: #7e838a;
}

.tb-on {
  width: 28px;
  margin-right: 3px;
  background-color: #21262e;
  border-radius: 3px;
  color: #5fb2f5;
}

.sep {
  width: 1px;
  height: 31px;
  margin: 0 3px;
  background-color: #4d535f;
  flex: none;
}

.sep-a {
  margin-left: 5px;
}

.sep-b {
  margin-left: 4px;
}

.tb-text {
  margin-left: 17px;
  padding-bottom: 2px;
  color: #c9ccd1;
}

.tb-transform {
  margin-left: 9px;
}

.sep-end {
  margin-left: 12px;
}

/* 3D view */
.viewport {
  position: relative;
  flex: 1;
  background-color: #4a4a4a;
  border: 2px solid #6592b5;
  overflow: hidden;
}

.scene {
  display: block;
  width: 1352px;
  height: 620px;
}

.grid {
  fill: none;
  stroke: #515151;
  stroke-width: 1;
}

.wire {
  fill: none;
  stroke: #3e5e6c;
  stroke-width: 1;
}

.field-red {
  fill: #e9eaeb;
  stroke: #f25c75;
  stroke-width: 5;
}

.field-blue {
  fill: #e9eaeb;
  stroke: #1bb3d6;
  stroke-width: 4;
}

.goal-red {
  fill: none;
  stroke: #f25c75;
  stroke-width: 4;
}

.goal-blue {
  fill: none;
  stroke: #1bb3d6;
  stroke-width: 4;
}

.dots-red {
  fill: none;
  stroke: #f25c75;
  stroke-width: 3;
}

.dots-blue {
  fill: none;
  stroke: #1bb3d6;
  stroke-width: 3;
}

.t-bar {
  fill: none;
  stroke: #6a6c6e;
  stroke-width: 4;
}

.frustum {
  fill: none;
  stroke: #9a5a9c;
  stroke-width: 1;
}

.cam-outline {
  fill: #000;
  stroke: #000;
  stroke-width: 3;
}

.cam-icon {
  fill: #aeaa93;
}

.cam-hole {
  fill: #4a4a4a;
  stroke: #000;
  stroke-width: 1.500;
}

.giz-text {
  font-size: 12px;
  text-anchor: middle;
  fill: #111;
}

.persp {
  position: absolute;
  left: 8px;
  top: 8px;
  display: flex;
  align-items: center;
  gap: 4px;
  height: 29px;
  padding: 0 4px 2px;
  background-color: #41454b;
  border-radius: 3px;
  color: #d8dade;
}

/* output panel */
.bottom {
  display: flex;
  flex-direction: column;
  flex: 1;
  background-color: #363d4a;
  border-radius: 3px;
  padding: 6px 4px 0;
}

.bottom-body {
  display: flex;
  flex: none;
  height: 211px;
}

.log-col {
  display: flex;
  flex-direction: column;
  gap: 4px;
  width: 1284px;
  flex: none;
}

.log {
  flex: 1;
  margin: 0;
  padding: 5px 4px;
  background-color: #21262e;
  border-radius: 3px;
  color: #7b7f85;
  font-family: "DejaVu Sans Mono", monospace;
  font-size: 13px;
  line-height: 16px;
  letter-spacing: -0.04px;
}

.log-head {
  color: #d9dbde;
}

.field-log {
  flex: none;
  padding-left: 6px;
}

.log-side {
  display: flex;
  flex-direction: column;
  align-items: flex-start;
  flex: 1;
  padding-left: 4px;
}

.side-row {
  display: flex;
  align-items: center;
  justify-content: space-between;
  width: 60px;
  height: 26px;
  flex: none;
  padding-left: 6px;
}

.side-row > .ico:nth-child(2) {
  margin-right: 6px;
}

.side-on {
  display: flex;
  align-items: center;
  justify-content: center;
  width: 28px;
  height: 26px;
  background-color: #21262e;
  border-radius: 3px;
}

.side-on .ico {
  color: #5fb2f5;
}

.side-sep {
  width: 62px;
  height: 1px;
  flex: none;
  background-color: #4d535f;
  margin: 5px 0 6px -1px;
}

.count {
  display: flex;
  align-items: center;
  width: 60px;
  height: 31px;
  flex: none;
  margin-bottom: 4px;
  padding-left: 6px;
  background-color: #21262e;
  border-bottom: 2px solid #5fb2f5;
  border-radius: 3px;
  color: #5fa3e0;
}

.count span {
  margin-left: 14px;
}

.bottom-tabs {
  display: flex;
  align-items: center;
  flex: 1;
  padding: 0 6px 2px 6px;
}

.btab {
  margin-right: 16.5px;
  color: #c9ccd1;
}

.btab-on {
  color: #5fa3e0;
}

.bottom-right {
  display: flex;
  align-items: center;
  margin-left: auto;
}

.ver-ico {
  color: #555b66;
  margin-right: 10px;
}

.version {
  color: #7b8087;
}

.pin {
  margin-left: 15px;
}

.pin2 {
  margin-left: 16px;
}

/* inspector */
.col-right {
  width: 270px;
}

.insp-tools {
  display: flex;
  align-items: center;
  flex: none;
  height: 32px;
  padding: 5px 0 0 10px;
  gap: 16px;
}

.insp-spacer {
  flex: 1;
}

.hist {
  margin-left: 3px;
  margin-right: 10px;
}

.insp-tools .arr-btn {
  margin-right: -5px;
}

.insp-row {
  display: flex;
  align-items: center;
  flex: none;
  margin-top: 4px;
  padding-left: 4px;
  gap: 10px;
}

.field-blank {
  width: 230px;
  background-color: #2e3440;
  border-bottom: none;
}

.field-props {
  width: 230px;
}

.insp-tree {
  margin-top: 4px;
}
```
